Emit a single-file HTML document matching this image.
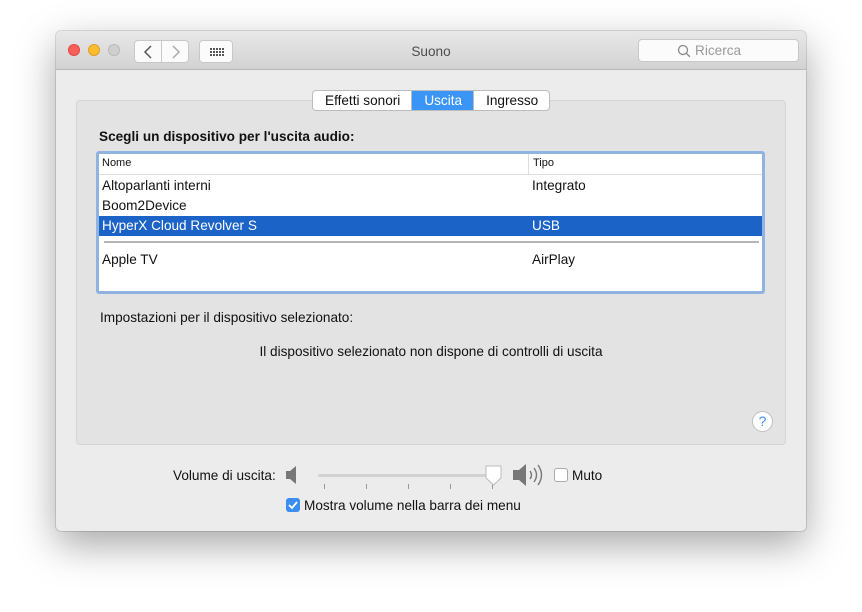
<!DOCTYPE html><html><head><style>
*{box-sizing:border-box;margin:0;padding:0}
body{width:862px;height:612px;background:#fff;font-family:"Liberation Sans",sans-serif;font-size:13.6px;color:#111;position:relative;overflow:hidden}
.win{position:absolute;left:56px;top:31px;width:750px;height:500px;background:#ececec;border-radius:5px;box-shadow:0 14px 40px rgba(0,0,0,.35),0 0 0 1px rgba(0,0,0,.12);overflow:hidden}
.tb{position:absolute;left:0;top:0;width:750px;height:39px;background:linear-gradient(#e9e8e9,#d3d2d3);border-bottom:1px solid #b8b8b8}
.dot{position:absolute;top:13px;width:12px;height:12px;border-radius:50%}
.btn{position:absolute;top:9px;height:23px;background:#fbfbfb;border:1px solid #c8c8c8;border-radius:4px}
.a{position:absolute}
.panel{position:absolute;left:20px;top:69px;width:710px;height:345px;background:#e3e3e3;border:1px solid #d4d4d4;border-radius:4px}
.tabs{position:absolute;left:256px;top:59px;height:21px;display:flex;border:1px solid #bcbcbc;border-radius:4px;background:#fff;overflow:hidden;font-size:13.6px}
.tabs div{padding:1px 11px 0 12px;line-height:18px}
.list{position:absolute;left:40px;top:120px;width:669px;height:143px;background:#fff;border:3px solid #8fb4e2;border-radius:3px}
.row{position:absolute;left:0;width:663px;height:20px;line-height:20px}
</style></head><body>
<div class="win">
<div class="tb">
<div class="dot" style="left:12px;background:#fc5f57;border:1px solid #df4840"></div>
<div class="dot" style="left:32px;background:#fdbc2e;border:1px solid #dea024"></div>
<div class="dot" style="left:52px;background:#cfcfcf;border:1px solid #b9b9b9"></div>
<div class="btn" style="left:78px;width:28px;border-radius:4px 0 0 4px"><svg width="28" height="22"><path d="M16 5l-6 6 6 6" stroke="#555" stroke-width="1.5" fill="none"/></svg></div>
<div class="btn" style="left:105px;width:28px;border-radius:0 4px 4px 0"><svg width="28" height="22"><path d="M11 5l6 6-6 6" stroke="#aaa" stroke-width="1.5" fill="none"/></svg></div>
<div class="btn" style="left:143px;width:34px"><svg width="34" height="22"><g fill="#555"><rect x="10" y="7" width="2" height="2"/><rect x="13" y="7" width="2" height="2"/><rect x="16" y="7" width="2" height="2"/><rect x="19" y="7" width="2" height="2"/><rect x="22" y="7" width="2" height="2"/><rect x="10" y="10" width="2" height="2"/><rect x="13" y="10" width="2" height="2"/><rect x="16" y="10" width="2" height="2"/><rect x="19" y="10" width="2" height="2"/><rect x="22" y="10" width="2" height="2"/><rect x="10" y="13" width="2" height="2"/><rect x="13" y="13" width="2" height="2"/><rect x="16" y="13" width="2" height="2"/><rect x="19" y="13" width="2" height="2"/><rect x="22" y="13" width="2" height="2"/></g></svg></div>
<div class="a" style="left:0;width:750px;top:13px;text-align:center;color:#4d4d4d">Suono</div>
<div class="btn" style="left:582px;width:161px;top:8px;height:23px;color:#9a9a9a;padding:3px 0 0 40px"><svg class="a" style="left:38px;top:4px" width="14" height="14"><circle cx="6" cy="6" r="4.5" stroke="#888" stroke-width="1.3" fill="none"/><path d="M9.3 9.3l3.5 3.5" stroke="#888" stroke-width="1.4"/></svg><span style="margin-left:16px">Ricerca</span></div>
</div>
<div class="panel"></div>
<div class="tabs"><div>Effetti sonori</div><div style="background:#3b95f7;color:#fff;border-left:1px solid #bcbcbc;border-right:1px solid #bcbcbc">Uscita</div><div>Ingresso</div></div>
<div class="a" style="left:43px;top:98px;font-weight:bold">Scegli un dispositivo per l'uscita audio:</div>
<div class="list">
<div class="a" style="left:0;top:0;width:663px;height:21px;border-bottom:1px solid #ddd;font-size:11px;line-height:19px;padding-left:3px">Nome<span class="a" style="left:429px;top:0;border-left:1px solid #ddd;padding-left:4px;height:20px">Tipo</span></div>
<div class="row" style="top:22px;padding-left:3px">Altoparlanti interni<span class="a" style="left:433px">Integrato</span></div>
<div class="row" style="top:42px;padding-left:3px">Boom2Device</div>
<div class="row" style="top:62px;padding-left:3px;background:#1b63c6;color:#fff">HyperX Cloud Revolver S<span class="a" style="left:433px">USB</span></div>
<div class="a" style="left:5px;top:87px;width:655px;height:2px;background:#b5b5b5"></div>
<div class="row" style="top:96px;padding-left:3px">Apple TV<span class="a" style="left:433px">AirPlay</span></div>
</div>
<div class="a" style="left:44px;top:279px">Impostazioni per il dispositivo selezionato:</div>
<div class="a" style="left:0;width:750px;top:313px;text-align:center;padding-left:0">Il dispositivo selezionato non dispone di controlli di uscita</div>
<div class="a" style="left:696px;top:380px;width:21px;height:21px;border-radius:50%;background:#fff;border:1px solid #c0c0c0;color:#3b8ef0;text-align:center;line-height:19px;font-size:14px">?</div>
<div class="a" style="left:117px;top:437px">Volume di uscita:</div>
<svg class="a" style="left:228px;top:434px" width="16" height="20"><path d="M2 6h4l6-5v18l-6-5H2z" fill="#777"/></svg>
<div class="a" style="left:262px;top:443px;width:176px;height:3px;background:#d2d2d2;border-radius:2px"></div>
<div class="a" style="left:268px;top:453px;width:1px;height:5px;background:#999;box-shadow:42px 0 #999,84px 0 #999,126px 0 #999,168px 0 #999"></div>
<svg class="a" style="left:428px;top:434px" width="20" height="22"><path d="M2 1h15v12l-7.5 7L2 13z" fill="#fff" stroke="#bbb"/></svg>
<svg class="a" style="left:456px;top:432px" width="34" height="24"><path d="M1 7h6l7-6v22l-7-6H1z" fill="#777"/><path d="M18 8q3 4 0 8M22 5q5 7 0 14M26 2q7 10 0 20" stroke="#777" stroke-width="1.4" fill="none"/></svg>
<div class="a" style="left:498px;top:437px;width:14px;height:14px;background:#fff;border:1px solid #aaa;border-radius:3px"></div>
<div class="a" style="left:516px;top:437px">Muto</div>
<div class="a" style="left:230px;top:467px;width:14px;height:14px;background:#3b8ef0;border-radius:3px"><svg width="14" height="14"><path d="M3 7l3 3 5-6" stroke="#fff" stroke-width="1.8" fill="none"/></svg></div>
<div class="a" style="left:248px;top:467px">Mostra volume nella barra dei menu</div>
</div>
</body></html>
